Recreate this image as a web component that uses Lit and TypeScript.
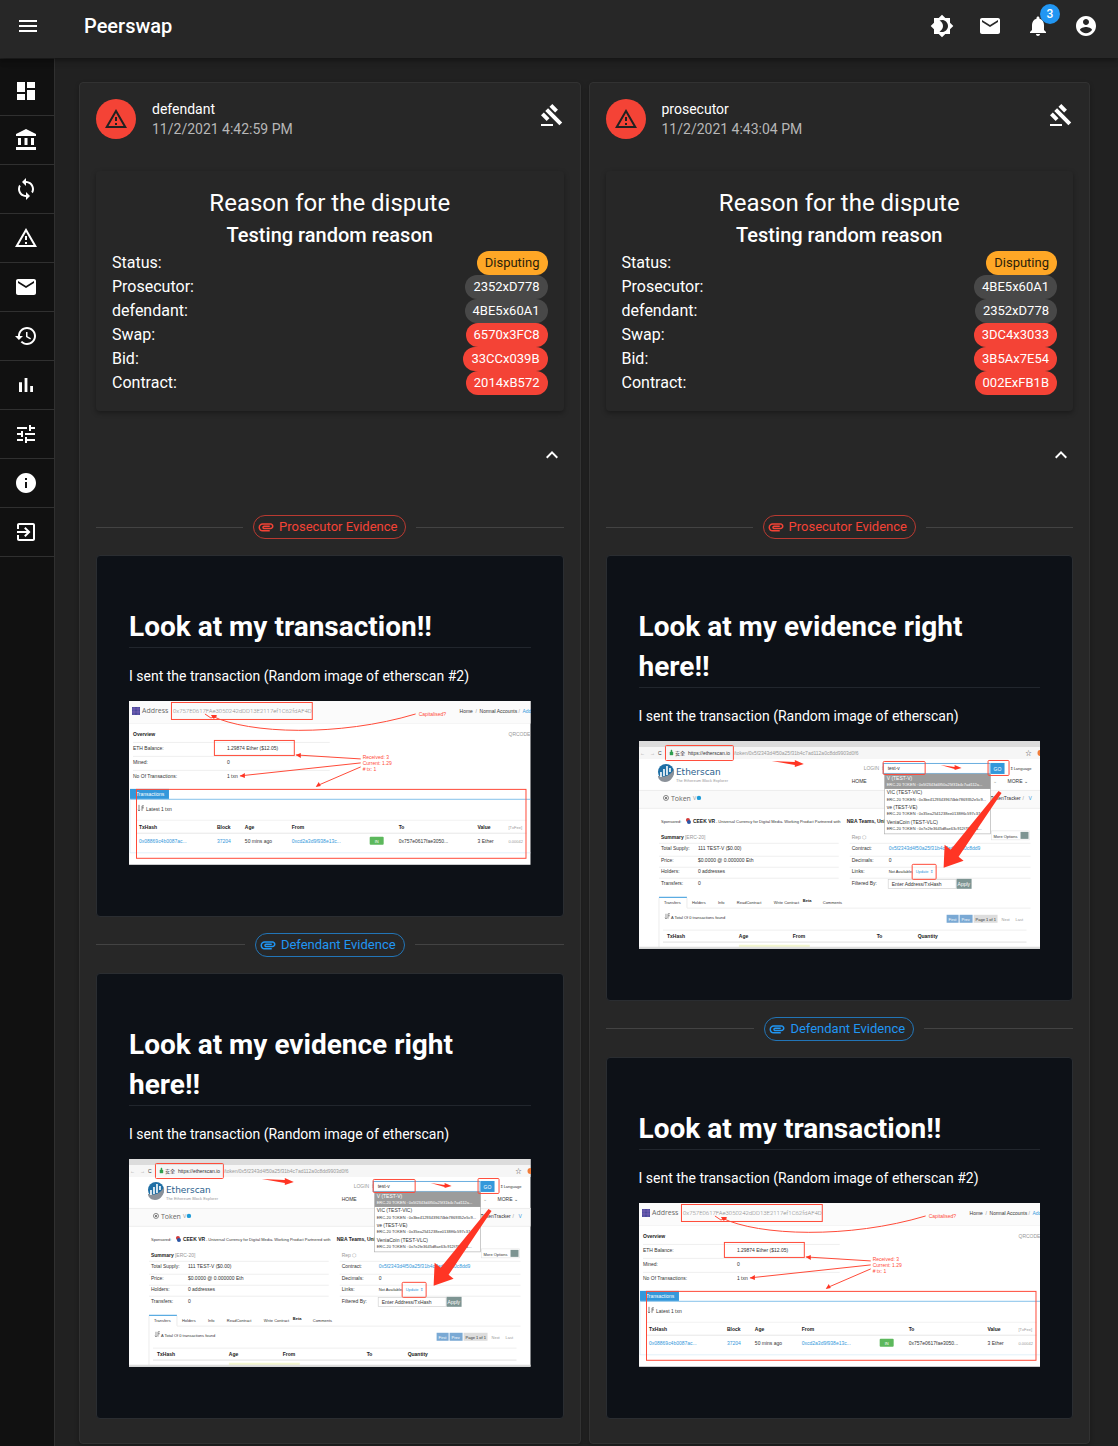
import { LitElement, html, svg, css } from "lit";
import { customElement, property, state } from "lit/decorators.js";

const ICONS = {
  menu: "M3 18h18v-2H3v2zm0-5h18v-2H3v2zm0-7v2h18V6H3z",
  dashboard: "M3 13h8V3H3v10zm0 8h8v-6H3v6zm10 0h8V11h-8v10zm0-18v6h8V3h-8z",
  bank: "M4 10h3v7H4zm6.5 0h3v7h-3zM2 19h20v3H2zm15-9h3v7h-3zm-5-9L2 6v2h20V6z",
  sync: "M12 4V1L8 5l4 4V6c3.31 0 6 2.69 6 6 0 1.01-.25 1.97-.7 2.8l1.46 1.46C19.54 15.03 20 13.57 20 12c0-4.42-3.58-8-8-8zm0 14c-3.31 0-6-2.69-6-6 0-1.01.25-1.97.7-2.8L5.24 7.74C4.46 8.97 4 10.43 4 12c0 4.42 3.58 8 8 8v3l4-4-4-4v3z",
  warning: "M12 5.99L19.53 19H4.47L12 5.99M12 2L1 21h22L12 2zm1 14h-2v2h2v-2zm0-6h-2v4h2v-4z",
  mail: "M20 4H4c-1.1 0-1.99.9-1.99 2L2 18c0 1.1.9 2 2 2h16c1.1 0 2-.9 2-2V6c0-1.1-.9-2-2-2zm0 4l-8 5-8-5V6l8 5 8-5v2z",
  history: "M13 3c-4.97 0-9 4.03-9 9H1l3.89 3.89.07.14L9 12H6c0-3.87 3.13-7 7-7s7 3.13 7 7-3.13 7-7 7c-1.93 0-3.68-.79-4.94-2.06l-1.42 1.42C8.27 19.99 10.51 21 13 21c4.97 0 9-4.03 9-9s-4.03-9-9-9zm-1 5v5l4.28 2.54.72-1.21-3.5-2.08V8H12z",
  chart: "M5 9.2h3V19H5zM10.6 5h2.8v14h-2.8zm5.6 8H19v6h-2.8z",
  tune: "M3 17v2h6v-2H3zM3 5v2h10V5H3zm10 16v-2h8v-2h-8v-2h-2v6h2zM7 9v2H3v2h4v2h2V9H7zm14 4v-2H11v2h10zm-6-4h2V7h4V5h-4V3h-2v6z",
  info: "M12 2C6.48 2 2 6.48 2 12s4.48 10 10 10 10-4.48 10-10S17.52 2 12 2zm1 15h-2v-6h2v6zm0-8h-2V7h2v2z",
  exit: "M10.09 15.59L11.5 17l5-5-5-5-1.41 1.41L12.67 11H3v2h9.67l-2.58 2.59zM19 3H5c-1.11 0-2 .9-2 2v4h2V5h14v14H5v-4H3v4c0 1.1.89 2 2 2h14c1.1 0 2-.9 2-2V5c0-1.1-.9-2-2-2z",
  brightness: "M20 8.69V4h-4.69L12 .69 8.69 4H4v4.69L.69 12 4 15.31V20h4.69L12 23.31 15.31 20H20v-4.69L23.31 12 20 8.69zM12 18c-.89 0-1.74-.2-2.5-.55C11.56 16.5 13 14.42 13 12s-1.44-4.5-3.5-5.45C10.26 6.2 11.11 6 12 6c3.31 0 6 2.69 6 6s-2.69 6-6 6z",
  bell: "M12 22c1.1 0 2-.9 2-2h-4c0 1.1.89 2 2 2zm6-6v-5c0-3.07-1.64-5.64-4.5-6.32V4c0-.83-.67-1.5-1.5-1.5s-1.5.67-1.5 1.5v.68C7.63 5.36 6 7.92 6 11v5l-2 2v1h16v-1l-2-2z",
  account: "M12 2C6.48 2 2 6.48 2 12s4.48 10 10 10 10-4.48 10-10S17.52 2 12 2zm0 3c1.66 0 3 1.34 3 3s-1.34 3-3 3-3-1.34-3-3 1.34-3 3-3zm0 14.2c-2.5 0-4.71-1.28-6-3.22.03-1.99 4-3.08 6-3.08 1.99 0 5.97 1.09 6 3.08-1.29 1.94-3.5 3.22-6 3.22z",
  gavel: "M1 21h12v2H1zM5.245 8.07l2.83-2.827 14.14 14.142-2.828 2.828zM12.317 1l5.657 5.656-2.83 2.83-5.654-5.66zM3.825 9.485l5.657 5.657-2.828 2.828-5.657-5.657z",
  less: "M12 8l-6 6 1.41 1.41L12 10.83l4.59 4.58L18 14z",
  attachment: "M2 12.5C2 9.46 4.46 7 7.5 7H18c2.21 0 4 1.79 4 4s-1.79 4-4 4H9.5C8.12 15 7 13.88 7 12.5S8.12 10 9.5 10H17v2H9.41c-.55 0-.55 1 0 1H18c1.1 0 2-.9 2-2s-.9-2-2-2H7.5C5.57 9 4 10.57 4 12.5S5.57 16 7.5 16H17v2H7.5C4.46 18 2 15.54 2 12.5z",
};
type IconName = keyof typeof ICONS;

const icon = (name: IconName) =>
  html`<svg class="icon" viewBox="0 0 24 24" aria-hidden="true"><path d=${ICONS[name]}></path></svg>`;

/** Text label inside an illustration. */
const t = (x: number, y: number, text: string, cls = "", size = 5) =>
  svg`<text x=${x} y=${y} font-size=${size} class=${cls}>${text}</text>`;
const rule = (x1: number, x2: number, y: number, color = "#e4e4e4") =>
  svg`<rect x=${x1} y=${y} width=${x2 - x1} height=".6" fill=${color}></rect>`;
const frame = (x: number, y: number, w: number, h: number, r = 0) =>
  svg`<rect class="mark" x=${x} y=${y} width=${w} height=${h} rx=${r}></rect>`;

const resetStyles = css`
  *, *::before, *::after { box-sizing: border-box; }
  button { font: inherit; color: inherit; background: none; border: 0; padding: 0; cursor: pointer; }
  .icon { display: block; width: 24px; height: 24px; fill: currentColor; }
  .icon-button { display: flex; align-items: center; justify-content: center; border-radius: 50%; }
`;

const shotStyles = css`
  :host { display: block; }
  svg { display: block; width: 100%; height: auto; }
  text { font-family: "Liberation Sans", "Noto Sans CJK SC", sans-serif; fill: #333; }
  .b { font-weight: 700; fill: #222; }
  .blue { fill: #3498db; }
  .grey { fill: #999; }
  .white { fill: #fff; }
  .red { fill: #ff4a38; }
  .brand { font-family: "DejaVu Sans", sans-serif; fill: #2c5f8d; }
  .open { font-family: "Open Sans", sans-serif; fill: #666; }
  .thin { font-family: Roboto, sans-serif; fill: #8c8c8c; font-weight: 300; }
  .mark { fill: none; stroke: #ff4a38; stroke-width: 1; }
  .pen { fill: none; stroke: #ff4a38; stroke-width: 1; }
  .tip { fill: #ff3524; }
`;

@customElement("address-shot")
export class AddressShot extends LitElement {
  static styles = shotStyles;
  render() {
    return html`<svg viewBox="0 0 402 164" role="img" aria-label="Address page">
      <rect width="402" height="164" fill="#fff"></rect>
      <rect width="402" height="22" fill="#fbfbfb"></rect>
      ${rule(0, 402, 22, "#eee")}
      <rect x="3" y="6" width="8" height="8" fill="#4a4a9c"></rect>
      <path d="M3 8h8M3 11h8M5 6v8M9 6v8" stroke="#8a6ac0" stroke-width=".6"></path>
      ${t(13, 12, "Address", "open", 7)}
      ${t(44, 12, "0x757E0617FAe3050242dDD13E2117ef1C62fdAF4D", "thin", 6)}
      ${t(290, 15, "Capitalised?", "red")}
      ${t(331, 12, "Home", "", 5)}${t(347, 12, "/", "grey")}${t(351, 12, "Normal Accounts")}
      ${t(390, 12, "/", "grey")}${t(394, 12, "Add", "blue")}
      ${t(4, 35, "Overview", "b")}${t(380, 35, "QRCODE", "grey")}
      ${rule(4, 201, 41)}
      ${t(4, 49, "ETH Balance:")}${t(98, 49, "1.29874 Ether ($12.05)")}
      ${rule(4, 201, 55)}
      ${t(4, 63, "Mined:")}${t(98, 63, "0")}
      ${rule(4, 201, 69)}
      ${t(4, 77, "No Of Transactions:")}${t(98, 77, "1 txn")}
      ${t(234, 58, "Received: 3", "red")}${t(234, 64, "Current: 1.29", "red")}${t(234, 70, "# tx: 1", "red")}
      <rect x="1" y="88" width="39" height="10" fill="#3498db"></rect>
      ${t(7, 95, "Transactions", "white")}
      ${rule(1, 402, 98, "#3498db")}
      <path d="M1 98v54h401" fill="none" stroke="#cfe6f5" stroke-width=".6"></path>
      <path d="M10 104v6m-1-1l1 1 1-1M13 110v-5h2M13 107h2" fill="none" stroke="#333" stroke-width=".6"></path>
      ${t(17, 110, "Latest 1 txn")}
      ${rule(8, 398, 119, "#e8e8e8")}
      ${t(10, 128, "TxHash", "b")}${t(88, 128, "Block", "b")}${t(116, 128, "Age", "b")}${t(163, 128, "From", "b")}
      ${t(270, 128, "To", "b")}${t(349, 128, "Value", "b")}${t(380, 128, "[TxFee]", "grey", 4)}
      ${rule(8, 398, 132, "#d8d8d8")}
      ${t(10, 142, "0x08869c4b0087ac...", "blue")}${t(88, 142, "37204", "blue")}${t(116, 142, "50 mins ago")}
      ${t(163, 142, "0xcd2a3d9f938e13c...", "blue")}
      <rect x="241" y="136" width="14" height="8" rx="1" fill="#5cb85c"></rect>
      ${t(246, 142, "IN", "white", 4)}
      ${t(270, 142, "0x757e0617fae3050...")}${t(349, 142, "3 Ether")}${t(380, 142, "0.00042", "grey", 4)}
      ${frame(42.5, 1.5, 141, 17)}${frame(85.5, 39.5, 80, 15)}${frame(7.5, 88.5, 390, 69)}
      <path class="pen" d="M76 13l6 4 6-2M83 15C120 33 210 36 287 13M232 58L167 54M232 62L111 75M232 66L188 85"></path>
      <path class="tip" d="M82 14l6 0-3 4zM167 54l5-2v5zM111 75l5-3 0 5zM187 86l3-5 2 4z"></path>
    </svg>`;
  }
}

@customElement("token-shot")
export class TokenShot extends LitElement {
  static styles = shotStyles;
  render() {
    return html`<svg viewBox="0 0 402 208" role="img" aria-label="Token page">
      <rect width="402" height="208" fill="#fff"></rect>
      <rect width="402" height="6" fill="#dcdcdc"></rect>
      <rect y="6" width="402" height="12" fill="#f6f6f6"></rect>
      ${t(1, 14, "←", "grey")}${t(11, 14, "→", "grey")}${t(19, 14, "C", "")}
      <path d="M31 11h3v3h-3zM32 11V9h1v2" fill="#2e9e4f" stroke="#2e9e4f" stroke-width=".4"></path>
      ${t(36, 14, "安全", "")}${t(49, 14, "https://etherscan.io")}
      ${t(95, 14, "/token/0x5f2343d4f50a25f31b4c7ad112a0c8dd9903d0f6", "grey")}
      ${t(387, 14, "☆", "", 6)}<circle cx="402" cy="12" r="3" fill="#ef7c3a"></circle>
      <circle cx="27" cy="31" r="8" fill="#1f6fa5"></circle>
      <path d="M20 35c6 2 12-1 15-7 1 7-3 13-9 13-4 0-7-3-7-6z" fill="#8b9199"></path>
      <path d="M22 36v-5M25 35v-7M28 34v-9M31 31v-4" stroke="#fff" stroke-width="1.6"></path>
      ${t(37, 34, "Etherscan", "brand", 9)}${t(37, 41, "The Ethereum Block Explorer", "grey", 4)}
      ${t(225, 29, "LOGIN ⇕", "grey")}
      <rect x="244.500" y="22.500" width="107" height="10" fill="#fff" stroke="#6aaee0"></rect>
      ${t(249, 29, "test-v")}
      <rect x="352" y="22" width="14" height="11" fill="#3498db"></rect>${t(355, 30, "GO", "white")}
      ${t(371, 29, "⇕ Language", "", 4)}
      ${t(213, 42, "HOME")}${t(354, 42, "⌄", "grey")}${t(369, 42, "MORE ⌄")}
      <rect y="49" width="402" height="18" fill="#fafafa"></rect>
      ${rule(0, 402, 49)}${rule(0, 402, 67)}
      <circle cx="27" cy="57" r="2.500" fill="none" stroke="#555" stroke-width=".7"></circle>
      <circle cx="27" cy="57" r="1" fill="#555"></circle>
      ${t(32, 60, "Token", "open", 7)}${t(54, 59, "V", "grey")}
      <circle cx="60" cy="57" r="2.200" fill="#1e9bd7"></circle>
      ${t(352, 59, "TokenTracker")}${t(384, 59, "/", "grey")}${t(390, 59, "V", "blue")}
      ${t(22, 82, "Sponsored:", "", 4)}
      <circle cx="49" cy="79" r="2" fill="#d23b3b"></circle><circle cx="50" cy="81" r="2" fill="#2b56a5"></circle>
      ${t(54, 82, "CEEK VR", "b")}${t(77, 82, "- Universal Currency for Digital Media. Working Product Partnered with", "", 4)}
      ${t(208, 82, "NBA Teams, Univ", "b")}
      ${t(22, 98, "Summary", "b")}${t(46, 98, "[ERC-20]", "grey")}${t(213, 98, "Rep ⬡", "grey")}
      ${[102, 115, 126, 137].map((y) => svg`${rule(20, 200, y)}${rule(211, 392, y)}`)}
      ${t(22, 109, "Total Supply:")}${t(59, 109, "111 TEST-V ($0.00)")}
      ${t(22, 121, "Price:")}${t(59, 121, "$0.0000 @ 0.000000 Eth")}
      ${t(22, 132, "Holders:")}${t(59, 132, "0 addresses")}
      ${t(22, 144, "Transfers:")}${t(59, 144, "0")}
      ${t(213, 109, "Contract:")}${t(250, 109, "0x5f2343d4f50a25f31b4c7ad112a0c8dd9", "blue")}
      ${t(213, 121, "Decimals:")}${t(250, 121, "0")}
      ${t(213, 132, "Links:")}${t(250, 132, "Not Available,", "", 4)}${t(277, 132, "Update ⇕", "blue", 4)}
      ${t(213, 144, "Filtered By:")}
      <rect x="249.500" y="138.500" width="68" height="9" fill="#fff" stroke="#ccc" stroke-width=".6"></rect>
      ${t(253, 145, "Enter Address/TxHash", "", 5)}
      <rect x="318" y="138" width="15" height="10" fill="#7d9492"></rect>${t(319, 145, "Apply", "white")}
      <rect x="353" y="90" width="38" height="9" fill="#fff" stroke="#ddd" stroke-width=".5"></rect>
      ${t(355, 97, "More Options", "", 4)}<rect x="382" y="91" width="8" height="7" fill="#7d9492"></rect>
      <rect x="20" y="156" width="28" height="1" fill="#3498db"></rect>
      <path d="M20 157v50M48 157v10" stroke="#ddd" stroke-width=".6"></path>
      ${rule(48, 392, 167)}
      ${t(25, 163, "Transfers", "", 4)}${t(53, 163, "Holders", "", 4)}${t(79, 163, "Info", "", 4)}
      ${t(98, 163, "ReadContract", "", 4)}${t(135, 163, "Write Contract", "", 4)}${t(164, 161, "Beta", "b", 4)}
      ${t(184, 163, "Comments", "", 4)}
      <path d="M27 173v5m-1-1l1 1 1-1M29 178v-5h2M29 175h2" fill="none" stroke="#333" stroke-width=".5"></path>
      ${t(32, 178, "A Total Of 0 transactions found", "", 4)}
      <rect x="308" y="174" width="12" height="8" fill="#7aa9d4"></rect>${t(310, 180, "First", "white", 4)}
      <rect x="321" y="174" width="13" height="8" fill="#7aa9d4"></rect>${t(323, 180, "Prev", "white", 4)}
      <rect x="335" y="174" width="24" height="8" fill="#ddd"></rect>${t(337, 180, "Page 1 of 1", "", 4)}
      ${t(363, 180, "Next", "grey", 4)}${t(377, 180, "Last", "grey", 4)}
      ${rule(24, 388, 189)}
      ${t(28, 197, "TxHash", "b")}${t(100, 197, "Age", "b")}${t(154, 197, "From", "b")}${t(238, 197, "To", "b")}${t(279, 197, "Quantity", "b")}
      ${rule(24, 388, 201, "#ccc")}
      <rect x="100" y="204" width="71" height="3" fill="#f3f6cf"></rect>
      <rect y="206" width="402" height="2" fill="#dedede"></rect>
      <rect x="246" y="33" width="106" height="60" fill="#fff" stroke="#aaa" stroke-width=".6"></rect>
      <rect x="246" y="33" width="106" height="15" fill="#9c9c9c"></rect>
      ${t(248, 39, "V (TEST-V)", "white")}${t(248, 45, "ERC-20 TOKEN : 0x5f2343d4f50a25f31b4c7ad112a...", "white", 4)}
      ${t(248, 53, "VIC (TEST-VIC)")}${t(248, 60, "ERC-20 TOKEN : 0x3be41293439674bb7869352e5c9...", "", 4)}
      ${t(248, 68, "ve (TEST-VE)")}${t(248, 74, "ERC-20 TOKEN : 0x35ea2541238ee0138ff6c597c37...", "", 4)}
      ${t(248, 83, "VeniaCoin (TEST-VLC)")}${t(248, 89, "ERC-20 TOKEN : 0x7e2fe3645d8ae63c912f783284...", "", 4)}
      ${frame(26.5, 4.5, 68, 15, 1)}${frame(244.5, 20.5, 42, 13, 1)}${frame(349.5, 19.5, 21, 15, 1)}${frame(273.5, 123.5, 24, 15, 1)}
      <path class="tip" d="M133 20l23 1v-2l9 4-9 3v-2zM302 24l14 2v-2l7 3-7 2v-1z"></path>
      <path class="tip" d="M360 50l3 2-43 64 5 4-20 7 1-23 6 5z"></path>
    </svg>`;
  }
}

interface Dispute {
  role: string;
  date: string;
  ids: string[];
  evidence: ("address" | "token")[];
}

const FIELDS = ["Status:", "Prosecutor:", "defendant:", "Swap:", "Bid:", "Contract:"];
const TONES = ["warn", "plain", "plain", "danger", "danger", "danger"];

const DISPUTES: Dispute[] = [
  {
    role: "defendant",
    date: "11/2/2021 4:42:59 PM",
    ids: ["Disputing", "2352xD778", "4BE5x60A1", "6570x3FC8", "33CCx039B", "2014xB572"],
    evidence: ["address", "token"],
  },
  {
    role: "prosecutor",
    date: "11/2/2021 4:43:04 PM",
    ids: ["Disputing", "4BE5x60A1", "2352xD778", "3DC4x3033", "3B5Ax7E54", "002ExFB1B"],
    evidence: ["token", "address"],
  },
];

@customElement("dispute-card")
export class DisputeCard extends LitElement {
  static styles = [
    resetStyles,
    css`
      :host { display: block; min-width: 0; }
      .card {
        height: 100%; background: #272727; border: 1px solid #323232; border-radius: 4px;
        box-shadow: 0 2px 4px rgba(0, 0, 0, 0.25);
      }
      .head { display: flex; gap: 16px; padding: 16px; }
      .avatar {
        display: flex; align-items: center; justify-content: center; width: 40px; height: 40px;
        border-radius: 50%; background: #f44336; color: #212121;
      }
      .who { flex: 1; font-size: 14px; line-height: 20px; }
      .date { color: #b7b7b7; }
      .icon-button { width: 40px; height: 40px; }
      .head .icon-button { margin: -4px -8px 0 0; }
      .body { padding: 16px; }
      .summary { padding: 16px; border-radius: 4px; box-shadow: 0 2px 5px rgba(0, 0, 0, 0.35); }
      .title, .reason { margin: 0; text-align: center; line-height: 32px; }
      .title { font-size: 24px; font-weight: 400; }
      .reason { font-size: 20px; font-weight: 500; }
      .fields { margin: 0; font-size: 16px; line-height: 24px; }
      .field { display: flex; justify-content: space-between; }
      .field dd { margin: 0; }
      .chip {
        display: flex; align-items: center; height: 24px; padding: 0 8px; border-radius: 12px;
        font-size: 13px; white-space: nowrap;
      }
      .warn { background: #ffa726; color: #2b1e0a; }
      .plain { background: #484848; }
      .danger { background: #f44336; }
      .actions { display: flex; justify-content: flex-end; padding: 8px; }
      .evidence { padding: 32px 16px 24px; }
      .divider { display: flex; align-items: center; gap: 10px; }
      .divider::before, .divider::after { content: ""; flex: 1; height: 1px; background: #434343; }
      .tag { gap: 4px; padding: 0 8px 0 3px; border: 1px solid; }
      .tag .icon { width: 18px; height: 18px; }
      .tag.prosecutor { color: #f44336; border-color: #b93a31; }
      .tag.defender { color: #2196f3; border-color: #2275b7; }
      .doc {
        margin: 16px 0; padding: 51px 32px; background: #0d1117; border: 1px solid #2a2d31; border-radius: 4px;
      }
      .doc:last-child { margin-bottom: 0; }
      .doc h2 {
        margin: 0 0 16px; font-size: 28px; line-height: 40px; font-weight: 700; border-bottom: 1px solid #21262d;
      }
      .doc p { margin: 0 0 13px; font-size: 14px; line-height: 24px; }
    `,
  ];

  @property({ attribute: false }) dispute!: Dispute;
  @state() private open = true;

  private renderEvidence(kind: "address" | "token", index: number) {
    const isAddress = kind === "address";
    return html`
      <div class="divider">
        <span class="chip tag ${index === 0 ? "prosecutor" : "defender"}">
          ${icon("attachment")}<span>${index === 0 ? "Prosecutor" : "Defendant"} Evidence</span>
        </span>
      </div>
      <article class="doc">
        <h2>${isAddress ? "Look at my transaction!!" : "Look at my evidence right here!!"}</h2>
        <p>I sent the transaction (Random image of etherscan${isAddress ? " #2" : ""})</p>
        ${isAddress ? html`<address-shot></address-shot>` : html`<token-shot></token-shot>`}
      </article>`;
  }

  render() {
    const d = this.dispute;
    return html`<section class="card">
      <header class="head">
        <span class="avatar">${icon("warning")}</span>
        <div class="who"><div>${d.role}</div><div class="date">${d.date}</div></div>
        <button class="icon-button" aria-label="Judge">${icon("gavel")}</button>
      </header>
      <div class="body">
        <div class="summary">
          <h2 class="title">Reason for the dispute</h2>
          <h3 class="reason">Testing random reason</h3>
          <dl class="fields">
            ${FIELDS.map((f, i) => html`<div class="field"><dt>${f}</dt><dd class="chip ${TONES[i]}">${d.ids[i]}</dd></div>`)}
          </dl>
        </div>
      </div>
      <div class="actions">
        <button class="icon-button" aria-label="Toggle evidence" aria-expanded=${this.open ? "true" : "false"}
          @click=${() => (this.open = !this.open)}>${icon("less")}</button>
      </div>
      ${this.open ? html`<div class="evidence">${d.evidence.map((e, i) => this.renderEvidence(e, i))}</div>` : null}
    </section>`;
  }
}

const NAV: [IconName, string][] = [
  ["dashboard", "Dashboard"], ["bank", "Bank"], ["sync", "Swaps"], ["warning", "Disputes"], ["mail", "Messages"],
  ["history", "History"], ["chart", "Statistics"], ["tune", "Settings"], ["info", "About"], ["exit", "Log out"],
];

@customElement("app-root")
export class AppRoot extends LitElement {
  static styles = [
    resetStyles,
    css`
      :host {
        display: flex; flex-direction: column; min-height: 100vh; background: #212121; color: #fff;
        font-family: Roboto, "Liberation Sans", sans-serif; font-size: 16px; line-height: 24px;
      }
      .bar {
        position: relative; z-index: 1; display: flex; align-items: center; padding: 2px 8px 8px 4px; background: #272727;
        box-shadow: 0 2px 4px -1px rgba(0, 0, 0, 0.2), 0 4px 5px rgba(0, 0, 0, 0.14), 0 1px 10px rgba(0, 0, 0, 0.12);
      }
      .brand { flex: 1; margin: 0 0 0 32px; font-size: 20px; font-weight: 500; }
      .icon-button { position: relative; width: 48px; height: 48px; }
      .badge {
        position: absolute; top: 2px; right: 2px; width: 20px; height: 20px; border-radius: 10px; background: #2196f3;
        font-size: 12px; line-height: 20px; font-weight: 500; text-align: center;
      }
      .layout { flex: 1; display: flex; }
      .side { flex: none; width: 55px; padding-top: 8px; background: #111; border-top: 1px solid #242424; border-right: 1px solid #303030; }
      .side a { display: flex; align-items: center; height: 49px; padding-left: 14px; border-bottom: 1px solid #303030; color: inherit; }
      .main { flex: 1; min-width: 0; display: grid; grid-template-columns: 1fr 1fr; gap: 8px; padding: 24px 28px 2px 24px; }
    `,
  ];

  render() {
    return html`
      <header class="bar">
        <button class="icon-button" aria-label="Menu">${icon("menu")}</button>
        <h1 class="brand">Peerswap</h1>
        <button class="icon-button" aria-label="Theme">${icon("brightness")}</button>
        <button class="icon-button" aria-label="Messages">${icon("mail")}</button>
        <button class="icon-button" aria-label="Notifications">${icon("bell")}<span class="badge">3</span></button>
        <button class="icon-button" aria-label="Account">${icon("account")}</button>
      </header>
      <div class="layout">
        <nav class="side">${NAV.map(([name, label]) => html`<a href="#" aria-label=${label}>${icon(name)}</a>`)}</nav>
        <main class="main">${DISPUTES.map((d) => html`<dispute-card .dispute=${d}></dispute-card>`)}</main>
      </div>`;
  }
}
